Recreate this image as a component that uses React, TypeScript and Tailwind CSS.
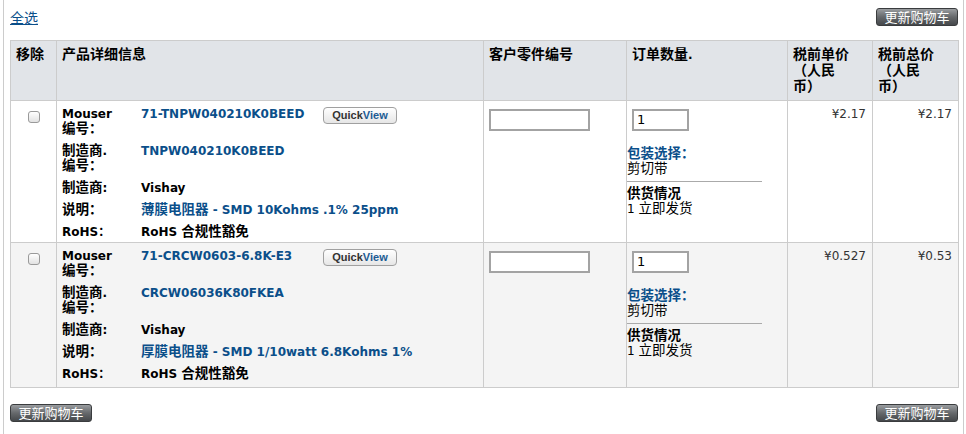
import React from "react";

type Item = {
  mouserNo: string;
  mfrNo: string;
  mfr: string;
  desc: string;
  unit: string;
  total: string;
  shaded?: boolean;
};

const items: Item[] = [
  {
    mouserNo: "71-TNPW040210K0BEED",
    mfrNo: "TNPW040210K0BEED",
    mfr: "Vishay",
    desc: "薄膜电阻器 - SMD 10Kohms .1% 25ppm",
    unit: "¥2.17",
    total: "¥2.17",
  },
  {
    mouserNo: "71-CRCW0603-6.8K-E3",
    mfrNo: "CRCW06036K80FKEA",
    mfr: "Vishay",
    desc: "厚膜电阻器 - SMD 1/10watt 6.8Kohms 1%",
    unit: "¥0.527",
    total: "¥0.53",
    shaded: true,
  },
];

const font = "font-['DejaVu_Sans','Noto_Sans_CJK_SC',sans-serif]";

// CJK glyphs in the original are a touch wider than the latin text size
function cj(text: string) {
  return text.split(/([\u3000-\u9fff\uff00-\uffef]+)/).map((part, i) =>
    /[\u3000-\u9fff\uff00-\uffef]/.test(part) ? (
      <span key={i} className="text-[13.5px] leading-[0]">
        {part}
      </span>
    ) : (
      part
    )
  );
}

function UpdateButton() {
  return (
    <button className="h-[18px] w-[82px] rounded-[3px] border border-[#3a3c3e] bg-gradient-to-b from-[#9a9da0] via-[#66696c] to-[#45484b] text-[13px] leading-[16px] text-white font-['Noto_Sans_CJK_SC',sans-serif]">
      更新购物车
    </button>
  );
}

function Checkbox() {
  return (
    <span className="inline-block h-[12px] w-[12px] rounded-[3px] border border-[#9a9a9a] bg-gradient-to-b from-white to-[#e2e2e2]" />
  );
}

function DetailRow({ label, children }: { label: React.ReactNode; children: React.ReactNode }) {
  return (
    <>
      <div>{label}</div>
      <div>{children}</div>
    </>
  );
}

function ItemRow({ item }: { item: Item }) {
  const bg = item.shaded ? "bg-[#f4f4f4]" : "bg-white";
  const cell = "border border-[#cccccc] align-top";
  return (
    <tr className={`${bg} ${item.shaded ? "h-[145px]" : "h-[142px]"}`}>
      <td className={`${cell} pt-[5px] text-center`}>
        <Checkbox />
      </td>
      <td className={`${cell} pl-[5px] pt-[6px]`}>
        <div className="relative">
          <div className="grid grid-cols-[79px_1fr] gap-y-[7px] text-[12px] font-bold leading-[15px] text-black">
            <DetailRow
              label={
                <>
                  Mouser
                  <br />
                  {cj("编号：")}
                </>
              }
            >
              <span className="text-[#0b4f8a]">{item.mouserNo}</span>
            </DetailRow>
            <DetailRow
              label={
                <>
                  {cj("制造商.")}
                  <br />
                  {cj("编号：")}
                </>
              }
            >
              <span className="text-[#0b4f8a]">{item.mfrNo}</span>
            </DetailRow>
            <DetailRow label={cj("制造商:")}>{item.mfr}</DetailRow>
            <DetailRow label={cj("说明：")}>
              <span className="text-[#0b4f8a]">{cj(item.desc)}</span>
            </DetailRow>
            <DetailRow label="RoHS：">{cj("RoHS 合规性豁免")}</DetailRow>
          </div>
          <button className="absolute left-[261px] top-0 h-[17px] w-[74px] rounded-[4px] border border-[#a0a0a0] bg-gradient-to-b from-white to-[#e6e6e6] text-[11px] font-bold leading-[15px] font-['Liberation_Sans',sans-serif]">
            <span className="text-[#333]">Quick</span>
            <span className="text-[#1d5b94]">View</span>
          </button>
        </div>
      </td>
      <td className={`${cell} pl-[5px] pt-[6px]`}>
        <input className="h-[22px] w-[101px] border-2 border-[#a3a3a3] bg-white px-[3px] text-[12px] outline-none" />
      </td>
      <td className={`${cell} pl-0 pt-[6px]`}>
        <input
          defaultValue="1"
          className="ml-[5px] h-[22px] w-[57px] border-2 border-[#a3a3a3] bg-white px-[3px] text-[13px] outline-none"
        />
        <div className="mt-[16px] text-[12px] leading-[15px]">
          <div className="font-bold text-[#0b4f8a]">{cj("包装选择：")}</div>
          <div className="text-black">{cj("剪切带")}</div>
          <div className="mt-[4px] w-[135px] border-t border-[#aaaaaa]" />
          <div className="mt-[5px] font-bold text-black">{cj("供货情况")}</div>
          <div className="text-black">{cj("1 立即发货")}</div>
        </div>
      </td>
      <td className={`${cell} pr-[6px] pt-[6px] text-right text-[12px] leading-[15px] text-[#333]`}>
        {item.unit}
      </td>
      <td className={`${cell} pr-[6px] pt-[6px] text-right text-[12px] leading-[15px] text-[#333]`}>
        {item.total}
      </td>
    </tr>
  );
}

export default function App() {
  const th = "border border-[#cccccc] px-[5px] pt-[5px] text-left align-top font-bold";
  return (
    <div className={`h-[434px] w-[966px] bg-white ${font}`}>
      <div className="ml-[3px] h-full w-[961px] border-x border-[#cccccc] pl-[6px] pr-[5px]">
        {/* select all + update */}
        <div className="flex h-[40px] items-start justify-between pt-[8px]">
          <a className="mt-[1px] text-[14px] leading-[16px] text-[#0b4f8a] underline font-['Noto_Sans_CJK_SC',sans-serif]">
            全选
          </a>
          <UpdateButton />
        </div>

        <table className="w-[948px] table-fixed border-collapse">
          <colgroup>
            <col className="w-[46px]" />
            <col className="w-[427px]" />
            <col className="w-[143px]" />
            <col className="w-[161px]" />
            <col className="w-[85px]" />
            <col className="w-[86px]" />
          </colgroup>
          <thead>
            <tr className="h-[60px] bg-[#e1e4e8] text-[14px] leading-[16px] text-black">
              <th className={th}>移除</th>
              <th className={th}>产品详细信息</th>
              <th className={th}>客户零件编号</th>
              <th className={th}>
                订单数量<span className="text-[12px]">.</span>
              </th>
              <th className={th}>
                税前单价
                <br />
                （人民
                <br />
                币）
              </th>
              <th className={th}>
                税前总价
                <br />
                （人民
                <br />
                币）
              </th>
            </tr>
          </thead>
          <tbody>
            {items.map((item) => (
              <ItemRow key={item.mouserNo} item={item} />
            ))}
          </tbody>
        </table>

        <div className="mt-[16px] flex justify-between">
          <UpdateButton />
          <UpdateButton />
        </div>
      </div>
    </div>
  );
}
